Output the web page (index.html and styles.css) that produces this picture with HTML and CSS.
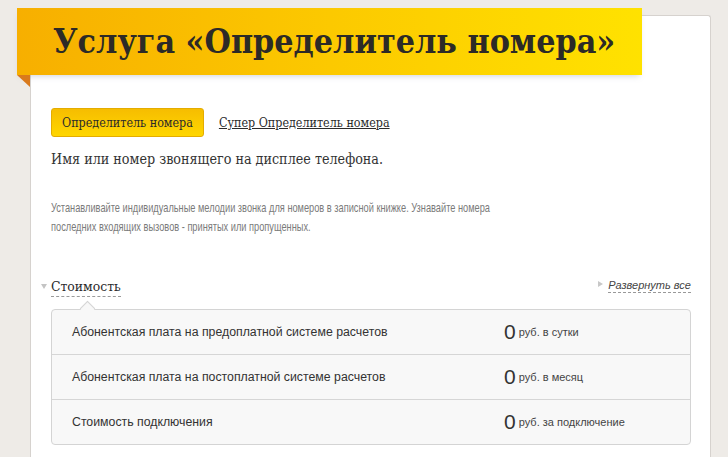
FILE: index.html
```html
<!DOCTYPE html>
<html lang="ru">
<head>
    <meta charset="UTF-8">
    <title>Услуга «Определитель номера»</title>
    <link rel="stylesheet" href="styles.css">
</head>
<body>
    <div class="page">
        <div class="card">
            <div class="ribbon">
                <h1>Услуга «Определитель номера»</h1>
            </div>
            <div class="content">
                <div class="tabs">
                    <span class="tab active">Определитель номера</span>
                    <a class="tab" href="#">Супер Определитель номера</a>
                </div>
                <p class="lead">Имя или номер звонящего на дисплее телефона.</p>
                <p class="desc">Устанавливайте индивидуальные мелодии звонка для номеров в записной книжке. Узнавайте номера последних входящих вызовов - принятых или пропущенных.</p>

                <div class="section-head">
                    <span class="section-title">Стоимость</span>
                    <span class="expand">Развернуть все</span>
                </div>
                <div class="prices">
                    <div class="row">
                        <span class="label">Абонентская плата на предоплатной системе расчетов</span>
                        <span class="value"><b>0</b> руб. в сутки</span>
                    </div>
                    <div class="row">
                        <span class="label">Абонентская плата на постоплатной системе расчетов</span>
                        <span class="value"><b>0</b> руб. в месяц</span>
                    </div>
                    <div class="row">
                        <span class="label">Стоимость подключения</span>
                        <span class="value"><b>0</b> руб. за подключение</span>
                    </div>
                </div>
            </div>
        </div>
    </div>
</body>
</html>
```

FILE: styles.css
```css
body {
    margin: 0;
    background-color: #eeebe7;
    font-family: "Liberation Sans", Arial, sans-serif;
    color: #333;
    overflow: hidden;
}
.page {
    padding: 15px 17px 0 30px;
}
.card {
    position: relative;
    background-color: #fff;
    border: 1px solid #d6d2ce;
    border-bottom: none;
    border-radius: 3px 3px 0 0;
    height: 460px;
}
.ribbon {
    position: relative;
    margin: -8px 0 0 -14px;
    width: 625px;
    height: 67px;
    background: linear-gradient(to right, #f7af00, #fcc900 50%, #ffe200);
    box-shadow: 0 4px 6px -3px rgba(120, 130, 160, 0.35);
}
.ribbon::after {
    content: "";
    position: absolute;
    left: 0;
    top: 67px;
    border-top: 12px solid #d97a1c;
    border-left: 13px solid transparent;
}
.ribbon h1 {
    margin: 0;
    padding: 11px 0 0 36px;
    font-family: "DejaVu Serif Condensed", "DejaVu Serif", serif;
    font-size: 33.7px;
    font-weight: bold;
    color: #2c2a27;
    line-height: 44px;
    white-space: nowrap;
}
.content {
    padding: 33px 20px 0 20px;
}
.tabs {
    display: flex;
    align-items: center;
    gap: 15px;
    height: 29px;
}
.tab {
    font-family: "DejaVu Serif Condensed", "DejaVu Serif", serif;
    font-size: 12.4px;
    color: #2b2b2b;
}
.tab.active {
    display: inline-block;
    padding: 0 10px;
    height: 27px;
    line-height: 27px;
    background: linear-gradient(to bottom, #f6bd00, #ffd600);
    border: 1px solid #e4ac00;
    border-radius: 3px;
}
a.tab {
    text-decoration: underline;
}
.lead {
    margin: 12px 0 0 0;
    font-family: "DejaVu Serif Condensed", "DejaVu Serif", serif;
    font-size: 14.2px;
    line-height: 20px;
    color: #333;
}
.desc {
    margin: 29px 0 0 0;
    width: 640px;
    font-size: 13px;
    line-height: 19px;
    color: #7a7a7a;
    transform: scaleX(0.71);
    transform-origin: left top;
}
.section-head {
    display: flex;
    justify-content: space-between;
    align-items: flex-end;
    margin-top: 40px;
    width: 640px;
}
.section-title {
    position: relative;
    font-family: "DejaVu Serif Condensed", "DejaVu Serif", serif;
    font-size: 13.8px;
    color: #2b2b2b;
    border-bottom: 1px dashed #9a9a9a;
    line-height: 20px;
}
.section-title::before {
    content: "";
    position: absolute;
    left: -10px;
    top: 8px;
    border-top: 5px solid #c4c4c4;
    border-left: 3px solid transparent;
    border-right: 3px solid transparent;
}
.expand {
    position: relative;
    font-size: 11px;
    font-style: italic;
    color: #444;
    border-bottom: 1px dashed #999;
    line-height: 14px;
    margin-bottom: 4px;
}
.expand::before {
    content: "";
    position: absolute;
    left: -10px;
    top: 3px;
    border-left: 5px solid #c8c8c8;
    border-top: 3px solid transparent;
    border-bottom: 3px solid transparent;
}
.prices {
    position: relative;
    margin-top: 12px;
    width: 638px;
    background-color: #f8f8f8;
    border: 1px solid #d4d4d4;
    border-radius: 4px;
}
.prices::before {
    content: "";
    position: absolute;
    left: 30px;
    top: -7px;
    width: 10px;
    height: 10px;
    background-color: #f8f8f8;
    border-top: 1px solid #d4d4d4;
    border-left: 1px solid #d4d4d4;
    transform: rotate(45deg);
}
.row {
    display: flex;
    align-items: center;
    height: 45px;
    box-sizing: border-box;
    border-top: 1px solid #d6d6d6;
}
.row:first-child {
    height: 44px;
    border-top: none;
}
.label {
    width: 432px;
    padding-left: 20px;
    font-size: 12.3px;
}
.value {
    font-size: 11px;
    color: #444;
}
.value b {
    font-weight: normal;
    font-size: 21px;
    color: #333;
    vertical-align: -3px;
}
```
